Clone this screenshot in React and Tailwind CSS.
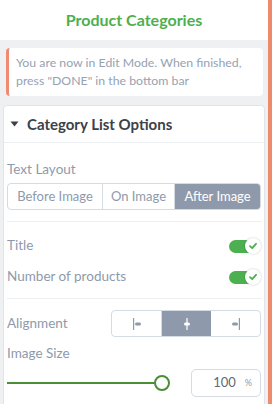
import React from "react";

function Toggle() {
  return (
    <div className="relative w-[32px] h-[16px] flex items-center">
      <div className="absolute left-0 top-[2px] w-[26px] h-[13px] rounded-full bg-[#4caf50]" />
      <div className="absolute right-0 top-0 w-[16px] h-[16px] rounded-full bg-white shadow-[0_0_2px_rgba(0,0,0,0.25)] flex items-center justify-center">
        <svg width="10" height="10" viewBox="0 0 10 10">
          <path d="M2 5.2 L4.2 7.2 L8 2.8" fill="none" stroke="#4caf50" strokeWidth="1.8" strokeLinecap="round" strokeLinejoin="round" />
        </svg>
      </div>
    </div>
  );
}

function AlignIcon({ type, active }) {
  const c = active ? "#ffffff" : "#8e9aab";
  let line, bar;
  if (type === "left") {
    line = <rect x="3" y="1" width="1.2" height="12" fill={c} />;
    bar = <rect x="5" y="5.5" width="6" height="3" rx="1.5" fill={c} />;
  } else if (type === "center") {
    line = <rect x="6.4" y="1" width="1.2" height="12" fill={c} />;
    bar = <rect x="4" y="5.5" width="6" height="3" rx="1.5" fill={c} />;
  } else {
    line = <rect x="9.8" y="1" width="1.2" height="12" fill={c} />;
    bar = <rect x="3" y="5.5" width="6" height="3" rx="1.5" fill={c} />;
  }
  return (
    <svg width="14" height="14" viewBox="0 0 14 14">
      {bar}
      {line}
    </svg>
  );
}

export default function App() {
  const font = { fontFamily: "Lato, 'Noto Sans', sans-serif" };
  return (
    <div className="flex w-[272px] h-[404px] overflow-hidden bg-white" style={font}>
      <div className="flex-1 flex flex-col min-w-0">
        <div className="h-[40px] shrink-0 bg-white flex items-center justify-center">
          <span className="text-[16px] font-bold text-[#4caf50]">Product Categories</span>
        </div>
        <div className="flex-1 bg-[#eef0f2] flex flex-col">
          <div className="mt-[8px] mr-[5px] ml-[6px] bg-white rounded-[4px] border-l-[3px] border-[#f08a70] pl-[7px] pr-2 py-[6px] text-[12.3px] leading-[18px] text-[#96a2b2]">
            You are now in Edit Mode. When finished, press "DONE" in the bottom bar
          </div>
          <div className="mt-[9px] ml-[3px] mr-[3px] flex-1 bg-white border border-[#e1e5e9] border-b-0 rounded-t-[4px] flex flex-col">
            <div className="h-[37px] shrink-0 flex items-center gap-[8px] pl-[6px] border-b border-[#eceff2]">
              <svg width="9" height="6" viewBox="0 0 9 6">
                <path d="M0.5 0.5 L8.5 0.5 L4.5 5.5 Z" fill="#3c4148" />
              </svg>
              <span className="text-[15px] font-bold text-[#3c4148]">Category List Options</span>
            </div>
            <div className="px-[3px] pt-[18px]">
              <div className="text-[13.5px] text-[#8e9aab] leading-[16px]">Text Layout</div>
              <div className="mt-[6px] flex h-[27px] border border-[#d5dbe1] rounded-[4px] overflow-hidden text-[13px]">
                <div className="w-[95px] flex items-center justify-center text-[#8e9aab] border-r border-[#d5dbe1]">Before Image</div>
                <div className="w-[72px] flex items-center justify-center text-[#8e9aab] border-r border-[#d5dbe1]">On Image</div>
                <div className="flex-1 flex items-center justify-center bg-[#8e9aab] text-white">After Image</div>
              </div>
            </div>
            <div className="mt-[11px] mx-[3px] border-t border-[#eceff2]" />
            <div className="px-[3px]">
              <div className="h-[31px] mt-[8px] flex items-center justify-between">
                <span className="text-[13.5px] text-[#8e9aab]">Title</span>
                <Toggle />
              </div>
              <div className="h-[31px] flex items-center justify-between">
                <span className="text-[13.5px] text-[#8e9aab]">Number of products</span>
                <Toggle />
              </div>
            </div>
            <div className="mt-[6px] mx-[3px] border-t border-[#eceff2]" />
            <div className="px-[3px] pt-[11px]">
              <div className="flex items-center justify-between">
                <span className="text-[13.5px] text-[#8e9aab]">Alignment</span>
                <div className="flex w-[150px] h-[27px] border border-[#d5dbe1] rounded-[4px] overflow-hidden">
                  <div className="flex-1 flex items-center justify-center border-r border-[#d5dbe1]"><AlignIcon type="left" /></div>
                  <div className="flex-1 flex items-center justify-center bg-[#8e9aab]"><AlignIcon type="center" active /></div>
                  <div className="flex-1 flex items-center justify-center"><AlignIcon type="right" /></div>
                </div>
              </div>
              <div className="mt-[8px] text-[13.5px] text-[#8e9aab] leading-[16px]">Image Size</div>
              <div className="mt-[8px] flex items-center justify-between">
                <div className="relative w-[164px] h-[18px] flex items-center">
                  <div className="w-[148px] h-[2px] bg-[#4a8f35]" />
                  <div className="absolute left-[147px] top-[1px] w-[16px] h-[16px] rounded-full border-2 border-[#4a8f35] bg-white" />
                </div>
                <div className="w-[70px] h-[28px] border border-[#d5dbe1] rounded-[5px] flex items-center justify-end pr-[8px] gap-[9px]">
                  <span className="text-[13px] text-[#5f6975]">100</span>
                  <span className="text-[9px] text-[#8e9aab]">%</span>
                </div>
              </div>
            </div>
          </div>
        </div>
      </div>
      <div className="w-[4px] shrink-0 bg-[#ec8a6b]" />
    </div>
  );
}
